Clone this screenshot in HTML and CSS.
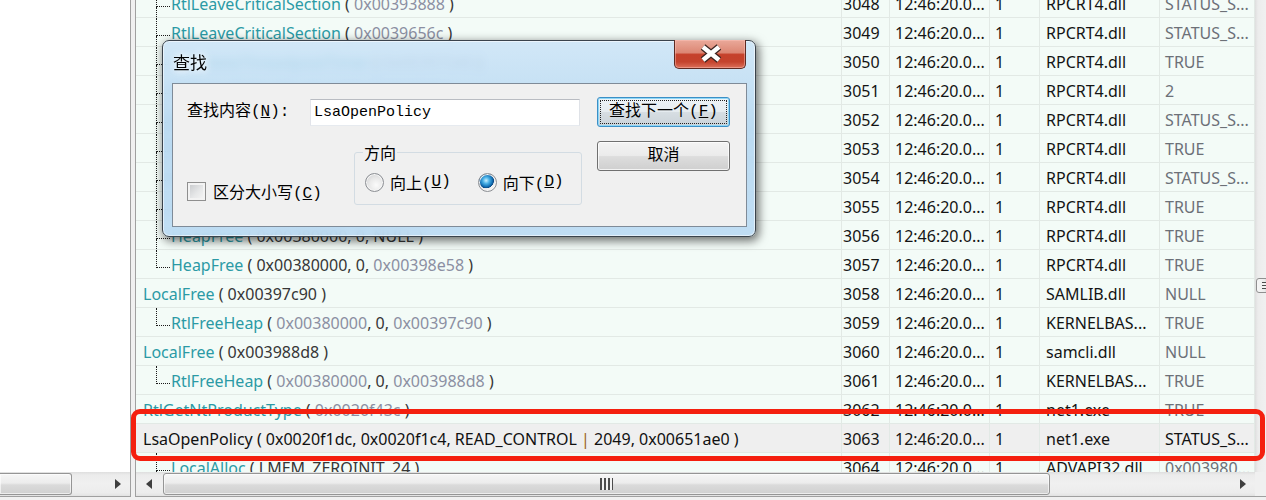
FILE: index.html
```html
<!DOCTYPE html>
<html>
<head>
<meta charset="utf-8">
<title>API Monitor</title>
<link rel="stylesheet" href="styles.css">
</head>
<body>
<div class="app">
  <div class="pane-left">
    <div class="left-body"></div>
    <div class="hscroll">
      <div class="thumb thumb-left"></div>
      <div class="track"></div>
      <div class="arrow"><svg width="6" height="10" viewBox="0 0 6 10"><polygon points="0,0 6,5 0,10" fill="#3f3f3f"/></svg></div>
    </div>
  </div>
  <div class="splitter"></div>
  <div class="pane-right">
    <div class="list">
      <div class="rows">
        <div class="row child cont"><div class="c-tree"><span class="elbow"></span><span class="txt"><span class="fn">RtlLeaveCriticalSection</span> ( <span class="p">0x00393888</span> )</span></div><div class="c-seq">3048</div><div class="c-time">12:46:20.0...</div><div class="c-thr">1</div><div class="c-mod">RPCRT4.dll</div><div class="c-ret">STATUS_S...</div></div>
        <div class="row child cont"><div class="c-tree"><span class="elbow"></span><span class="txt"><span class="fn">RtlLeaveCriticalSection</span> ( <span class="p">0x0039656c</span> )</span></div><div class="c-seq">3049</div><div class="c-time">12:46:20.0...</div><div class="c-thr">1</div><div class="c-mod">RPCRT4.dll</div><div class="c-ret">STATUS_S...</div></div>
        <div class="row child cont"><div class="c-tree"><span class="elbow"></span><span class="txt"><span class="fn">RtlDeleteThreadpoolTimer</span> ( <span class="p">0x00397540</span> )</span></div><div class="c-seq">3050</div><div class="c-time">12:46:20.0...</div><div class="c-thr">1</div><div class="c-mod">RPCRT4.dll</div><div class="c-ret">TRUE</div></div>
        <div class="row child cont"><div class="c-tree"><span class="elbow"></span><span class="txt"><span class="fn">RtlEnterCriticalSection</span> ( <span class="p">0x00393888</span> )</span></div><div class="c-seq">3051</div><div class="c-time">12:46:20.0...</div><div class="c-thr">1</div><div class="c-mod">RPCRT4.dll</div><div class="c-ret">2</div></div>
        <div class="row child cont"><div class="c-tree"><span class="elbow"></span><span class="txt"><span class="fn">RtlLeaveCriticalSection</span> ( <span class="p">0x00393888</span> )</span></div><div class="c-seq">3052</div><div class="c-time">12:46:20.0...</div><div class="c-thr">1</div><div class="c-mod">RPCRT4.dll</div><div class="c-ret">STATUS_S...</div></div>
        <div class="row child cont"><div class="c-tree"><span class="elbow"></span><span class="txt"><span class="fn">HeapFree</span> ( 0x00380000, 0, <span class="p">0x00397540</span> )</span></div><div class="c-seq">3053</div><div class="c-time">12:46:20.0...</div><div class="c-thr">1</div><div class="c-mod">RPCRT4.dll</div><div class="c-ret">TRUE</div></div>
        <div class="row child cont"><div class="c-tree"><span class="elbow"></span><span class="txt"><span class="fn">RtlLeaveCriticalSection</span> ( <span class="p">0x0039656c</span> )</span></div><div class="c-seq">3054</div><div class="c-time">12:46:20.0...</div><div class="c-thr">1</div><div class="c-mod">RPCRT4.dll</div><div class="c-ret">STATUS_S...</div></div>
        <div class="row child cont"><div class="c-tree"><span class="elbow"></span><span class="txt"><span class="fn">HeapFree</span> ( 0x00380000, 0, <span class="p">0x003975a8</span> )</span></div><div class="c-seq">3055</div><div class="c-time">12:46:20.0...</div><div class="c-thr">1</div><div class="c-mod">RPCRT4.dll</div><div class="c-ret">TRUE</div></div>
        <div class="row child cont"><div class="c-tree"><span class="elbow"></span><span class="txt"><span class="fn">HeapFree</span> ( 0x00380000, 0, NULL )</span></div><div class="c-seq">3056</div><div class="c-time">12:46:20.0...</div><div class="c-thr">1</div><div class="c-mod">RPCRT4.dll</div><div class="c-ret">TRUE</div></div>
        <div class="row child"><div class="c-tree"><span class="elbow"></span><span class="txt"><span class="fn">HeapFree</span> ( 0x00380000, 0, <span class="p">0x00398e58</span> )</span></div><div class="c-seq">3057</div><div class="c-time">12:46:20.0...</div><div class="c-thr">1</div><div class="c-mod">RPCRT4.dll</div><div class="c-ret">TRUE</div></div>
        <div class="row"><div class="c-tree"><span class="txt"><span class="fn">LocalFree</span> ( 0x00397c90 )</span></div><div class="c-seq">3058</div><div class="c-time">12:46:20.0...</div><div class="c-thr">1</div><div class="c-mod">SAMLIB.dll</div><div class="c-ret">NULL</div></div>
        <div class="row child"><div class="c-tree"><span class="elbow"></span><span class="txt"><span class="fn">RtlFreeHeap</span> ( <span class="p">0x00380000</span>, 0, <span class="p">0x00397c90</span> )</span></div><div class="c-seq">3059</div><div class="c-time">12:46:20.0...</div><div class="c-thr">1</div><div class="c-mod">KERNELBAS...</div><div class="c-ret">TRUE</div></div>
        <div class="row"><div class="c-tree"><span class="txt"><span class="fn">LocalFree</span> ( 0x003988d8 )</span></div><div class="c-seq">3060</div><div class="c-time">12:46:20.0...</div><div class="c-thr">1</div><div class="c-mod">samcli.dll</div><div class="c-ret">NULL</div></div>
        <div class="row child"><div class="c-tree"><span class="elbow"></span><span class="txt"><span class="fn">RtlFreeHeap</span> ( <span class="p">0x00380000</span>, 0, <span class="p">0x003988d8</span> )</span></div><div class="c-seq">3061</div><div class="c-time">12:46:20.0...</div><div class="c-thr">1</div><div class="c-mod">KERNELBAS...</div><div class="c-ret">TRUE</div></div>
        <div class="row"><div class="c-tree"><span class="txt"><span class="fn">RtlGetNtProductType</span> ( <span class="p">0x0020f43c</span> )</span></div><div class="c-seq">3062</div><div class="c-time">12:46:20.0...</div><div class="c-thr">1</div><div class="c-mod">net1.exe</div><div class="c-ret">TRUE</div></div>
        <div class="row sel"><div class="c-tree"><span class="txt">LsaOpenPolicy ( 0x0020f1dc, 0x0020f1c4, READ_CONTROL <span class="pipe">|</span> 2049, 0x00651ae0 )</span></div><div class="c-seq">3063</div><div class="c-time">12:46:20.0...</div><div class="c-thr">1</div><div class="c-mod">net1.exe</div><div class="c-ret">STATUS_S...</div></div>
        <div class="row child cont"><div class="c-tree"><span class="elbow"></span><span class="txt"><span class="fn">LocalAlloc</span> ( LMEM_ZEROINIT, 24 )</span></div><div class="c-seq">3064</div><div class="c-time">12:46:20.0...</div><div class="c-thr">1</div><div class="c-mod">ADVAPI32.dll</div><div class="c-ret">0x003980...</div></div>
      </div>
    </div>
    <div class="vscroll"><div class="vthumb"><span class="vgrip"></span></div></div>
    <div class="hscroll">
      <div class="arrow"><svg width="6" height="10" viewBox="0 0 6 10"><polygon points="6,0 0,5 6,10" fill="#3f3f3f"/></svg></div>
      <div class="thumb thumb-main"><span class="grip"></span></div>
      <div class="track"></div>
      <div class="arrow"><svg width="6" height="10" viewBox="0 0 6 10"><polygon points="0,0 6,5 0,10" fill="#3f3f3f"/></svg></div>
    </div>
    <div class="corner"></div>
  </div>

  <div class="dialog">
    <div class="titlebar">
      <span class="title">查找</span>
      <div class="close">
        <svg width="72" height="29" viewBox="0 0 72 29">
          <path d="M29 8 L45 21 M45 8 L29 21" stroke="#3b2420" stroke-width="7" fill="none"/>
          <path d="M29 8 L45 21 M45 8 L29 21" stroke="#ffffff" stroke-width="4.5" fill="none"/>
        </svg>
      </div>
    </div>
    <div class="client">
      <div class="main">
        <div class="find-row">
          <span class="lbl">查找内容(<u>N</u>):</span>
          <div class="input">LsaOpenPolicy</div>
        </div>
        <div class="opts">
          <div class="check"><span class="box"></span><span>区分大小写(<u>C</u>)</span></div>
          <fieldset class="dir">
            <legend>方向</legend>
            <div class="radios">
              <span class="radio"><span class="rb"></span>向上(<u>U</u>)</span>
              <span class="radio r2"><span class="rb on"></span>向下(<u>D</u>)</span>
            </div>
          </fieldset>
        </div>
      </div>
      <div class="buttons">
        <div class="btn default"><span>查找下一个(<u>F</u>)</span></div>
        <div class="btn"><span>取消</span></div>
      </div>
    </div>
  </div>

  <div class="annot"></div>
</div>
</body>
</html>
```

FILE: styles.css
```css
* { box-sizing: border-box; }
html, body { margin: 0; padding: 0; }
body {
  width: 1266px;
  height: 500px;
  overflow: hidden;
  background: #f0f0f0;
  font-family: "Noto Sans", "Open Sans", sans-serif;
}
.app {
  position: relative;
  display: flex;
  width: 1300px;
  height: 500px;
}

/* left pane */
.pane-left {
  width: 131px;
  height: 497px;
  display: flex;
  flex-direction: column;
  background: #fff;
  border-right: 1px solid #a0a0a0;
  border-bottom: 1px solid #a0a0a0;
}
.left-body { flex: 1; }
.splitter { width: 4px; }

/* right pane */
.pane-right {
  display: grid;
  grid-template-columns: 1119px 21px;
  grid-template-rows: 472px 24px;
  height: 497px;
  border-left: 1px solid #a0a0a0;
  border-bottom: 1px solid #a0a0a0;
}
.list {
  overflow: hidden;
  background: #f3fbf7;
}
.rows { margin-top: -11px; }
.row {
  display: grid;
  grid-template-columns: 706px 48px 100px 50px 120px 95px;
  height: 29px;
  border-bottom: 1px solid #e2e9e5;
  font-size: 16px;
  line-height: 29px;
  color: #141414;
}
.row > div {
  border-right: 1px solid #e2e9e5;
  white-space: nowrap;
  overflow: hidden;
  padding-left: 5px;
  padding-top: 1px;
  height: 28px;
}
.row > .c-seq { padding-left: 1px; }
.row > .c-mod { padding-left: 6px; }
.row > .c-ret { color: #6c7077; }
.row > .c-tree {
  display: flex;
  padding-left: 7px;
}
.row.child > .c-tree { padding-left: 20px; }
.txt { color: #363636; white-space: pre; }
.fn { color: #2b9aa5; }
.p { color: #8b8fa2; }

.elbow {
  width: 14px;
  flex: none;
  display: flex;
  flex-direction: column;
  margin-right: 1px;
  margin-top: -1px;
}
.elbow::before {
  content: "";
  height: 17px;
  flex: none;
  border-left: 1px dotted #1a1a1a;
  border-bottom: 1px dotted #1a1a1a;
}
.elbow::after { content: ""; flex: 1; }
.row.cont .elbow::after { border-left: 1px dotted #1a1a1a; }

.row.sel { background: #efefef; }
.row.sel .txt, .row.sel > .c-ret { color: #111; }
.pipe { color: #9a6418; }

/* scrollbars */
.hscroll {
  display: flex;
  height: 24px;
  background: linear-gradient(#dedede 0, #ececec 3px, #f0f0f0 50%, #ececec calc(100% - 3px), #e2e2e2 100%);
}
.pane-right .hscroll { grid-column: 1; grid-row: 2; }
.corner { grid-column: 2; grid-row: 2; background: #f0f0f0; }
.track { flex: 1; }
.arrow {
  width: 25px;
  flex: none;
  display: flex;
  align-items: center;
  justify-content: center;
}
.thumb {
  margin: 1px 0;
  border: 1px solid #959595;
  border-radius: 3px;
  background: linear-gradient(#f6f6f6 0%, #ececec 45%, #dadada 55%, #d0d0d0 100%);
  box-shadow: inset 0 0 0 1px rgba(255,255,255,0.6);
  display: flex;
  align-items: center;
  justify-content: center;
}
.thumb-left { width: 72px; border-left: none; border-radius: 0 3px 3px 0; }
.thumb-main { width: 887px; margin-left: 2px; }
.grip {
  width: 13px;
  height: 12px;
  background: repeating-linear-gradient(90deg, #4c4c4c 0 2px, #f2f2f2 2px 4px);
}
.vscroll {
  grid-column: 2;
  grid-row: 1;
  background: linear-gradient(90deg, #dedede 0, #ececec 3px, #f0f0f0 50%, #ececec calc(100% - 3px));
  padding-top: 278px;
}
.vthumb {
  height: 15px;
  margin: 0 1px;
  border: 1px solid #8f8f8f;
  border-radius: 3px;
  background: linear-gradient(90deg, #f6f6f6 0%, #ececec 45%, #dadada 55%, #d0d0d0 100%);
  display: flex;
  align-items: center;
  justify-content: center;
}
.vgrip {
  width: 7px;
  height: 7px;
  background: repeating-linear-gradient(180deg, #4c4c4c 0 1px, #f2f2f2 1px 3px);
}

/* find dialog (floating window) */
.dialog {
  position: absolute;
  left: 162px;
  top: 40px;
  width: 594px;
  height: 197px;
  border: 1px solid #3a434c;
  border-radius: 7px;
  background: linear-gradient(180deg, rgba(204,228,247,0.88) 0%, rgba(180,214,241,0.88) 45%, rgba(186,218,243,0.9) 100%);
  -webkit-backdrop-filter: blur(4px);
  backdrop-filter: blur(4px);
  box-shadow: 2px 3px 10px 1px rgba(0,0,0,0.55), inset 0 0 0 1px rgba(255,255,255,0.55);
  display: flex;
  flex-direction: column;
  padding: 0 8px 9px 9px;
  font-family: "Liberation Mono", "Noto Sans CJK SC", monospace;
  font-size: 16px;
  color: #000;
}
.titlebar {
  height: 42px;
  display: flex;
  align-items: flex-start;
  flex: none;
}
.title {
  font-family: "Noto Sans CJK SC", sans-serif;
  font-size: 17px;
  line-height: 24px;
  margin-top: 9px;
  padding-left: 1px;
  text-shadow: 0 0 6px #fff, 0 0 10px rgba(255,255,255,0.9);
}
.close {
  margin-left: auto;
  margin-top: -1px;
  margin-right: 1px;
  width: 72px;
  height: 29px;
  border: 1px solid #5e2a22;
  border-top: none;
  border-radius: 0 0 5px 5px;
  background: linear-gradient(#eaa99a 0%, #dc8774 45%, #c5412b 52%, #c4432d 78%, #dc705a 100%);
  box-shadow: inset 0 0 0 1px rgba(255,200,190,0.45);
}
.close svg { display: block; margin: -1px 0 0 -1px; }
.client {
  flex: 1;
  background: #f0f0f0;
  border: 1px solid #7f8b98;
  display: flex;
  padding: 13px 0 0 14px;
}
.main {
  width: 395px;
  display: flex;
  flex-direction: column;
}
.find-row {
  display: flex;
  align-items: center;
  height: 30px;
}
.lbl { width: 123px; line-height: 20px; }
.input {
  width: 270px;
  height: 27px;
  border: 1px solid;
  border-color: #b9bcc2 #dfe2e7 #e6eaef #e2e4ea;
  background: #fff;
  font-family: "Liberation Mono", monospace;
  font-size: 15px;
  line-height: 25px;
  padding-left: 3px;
}
.opts {
  display: flex;
  margin-top: 16px;
}
.check {
  width: 167px;
  height: 20px;
  margin-top: 38px;
  display: flex;
  align-items: center;
}
.box {
  width: 19px;
  height: 19px;
  margin-right: 7px;
  border: 1px solid #8f8f8f;
  background: linear-gradient(135deg, #c4c6c9 0%, #e6e7e8 55%, #f7f7f7 100%);
  box-shadow: inset 0 0 0 2px #f3f3f3;
}
.dir {
  width: 228px;
  margin: 0;
  padding: 0 0 12px 0;
  border: 1px solid #d3dce3;
  border-radius: 3px;
}
.dir legend {
  margin-left: 8px;
  padding: 0 1px;
  line-height: 18px;
  font-family: "Noto Sans CJK SC", sans-serif;
}
.radios {
  display: flex;
  padding-left: 10px;
  margin-top: 11px;
  height: 20px;
}
.radio {
  display: flex;
  align-items: center;
}
.r2 { margin-left: 27px; }
.rb {
  width: 19px;
  height: 19px;
  border-radius: 50%;
  margin-right: 6px;
  border: 1px solid #8c8f94;
  background: radial-gradient(circle at 60% 65%, #fbfbfb 0%, #e9e9e9 45%, #c9cacc 100%);
  box-shadow: inset 0 0 0 1px #f6f6f6;
}
.rb.on {
  background:
    radial-gradient(circle at 42% 38%, #c9f0ff 0, #4bb1e6 22%, #1574b8 42%, #0b4a86 52%, rgba(0,0,0,0) 56%),
    radial-gradient(circle at 60% 65%, #fbfbfb 0%, #e9e9e9 45%, #c9cacc 100%);
}
.buttons {
  margin-left: 15px;
  display: flex;
  flex-direction: column;
  gap: 14px;
}
.btn {
  position: relative;
  width: 133px;
  height: 30px;
  border: 1px solid #707070;
  border-radius: 3px;
  background: linear-gradient(#f3f3f3 0%, #ebebeb 48%, #dddddd 52%, #cfcfcf 100%);
  box-shadow: inset 0 0 0 1px rgba(255,255,255,0.75);
  display: flex;
  align-items: center;
  justify-content: center;
  line-height: 20px;
}
.btn.default {
  border-color: #3c8fc6;
  box-shadow: inset 0 0 0 1px #8fd7f7;
  background: linear-gradient(#eef4f8 0%, #e6ecf0 48%, #d6dde2 52%, #cbd3d9 100%);
}
.btn.default::after {
  content: "";
  position: absolute;
  inset: 2px;
  border: 1px dotted #222;
  border-radius: 1px;
}

/* red highlight annotation */
.annot {
  position: absolute;
  left: 131px;
  top: 409px;
  width: 1134px;
  height: 52px;
  border: 5px solid #f4200f;
  border-radius: 9px;
}
```
